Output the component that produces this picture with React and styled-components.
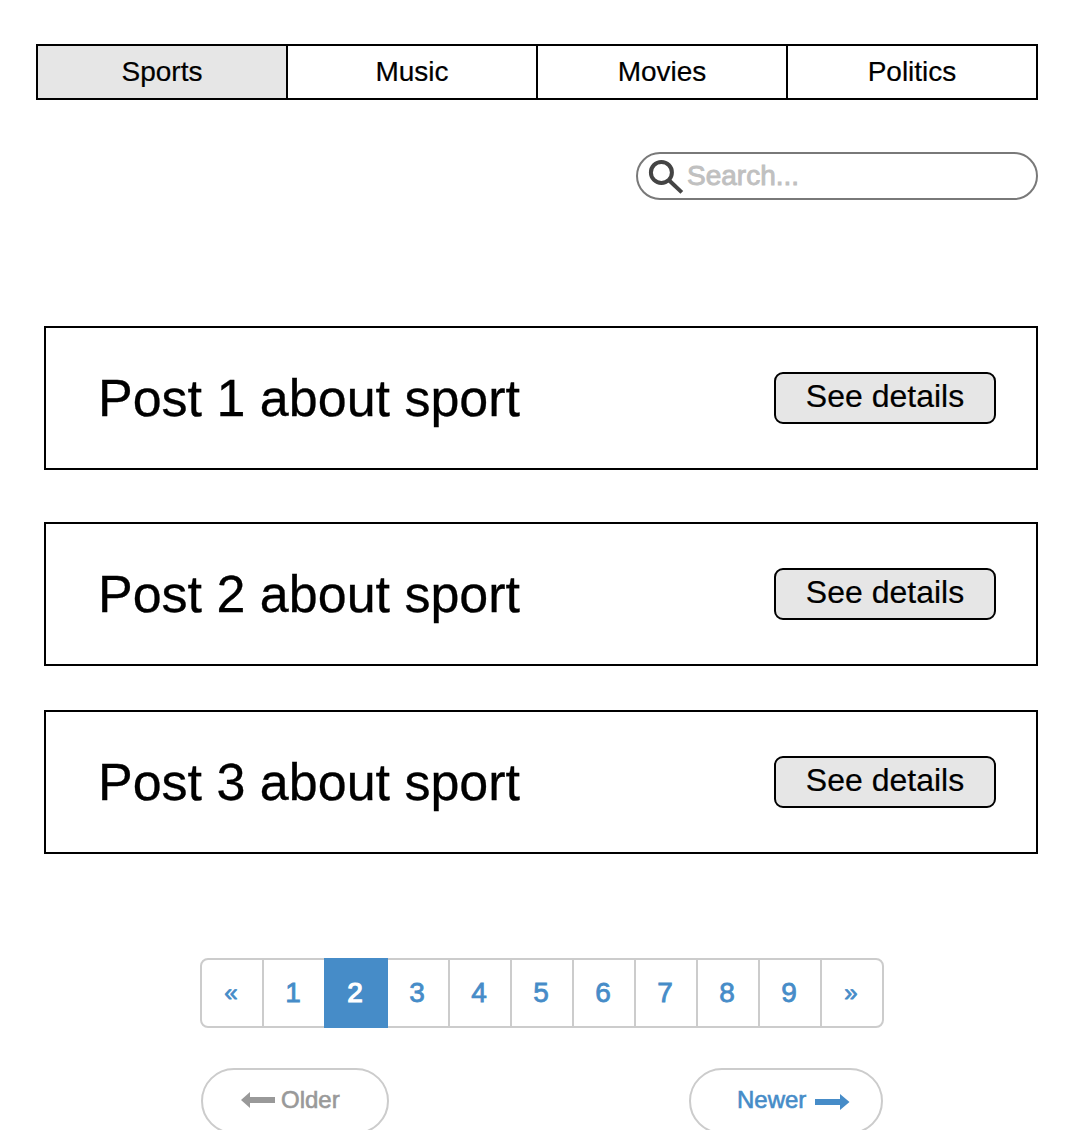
import React from "react";
import styled, { createGlobalStyle } from "styled-components";

const GlobalStyle = createGlobalStyle`
  *, *::before, *::after { box-sizing: border-box; }
  body {
    margin: 0;
    background: #fff;
    color: #000;
    font-family: "Liberation Sans", Arial, Helvetica, sans-serif;
  }
  button, input { font-family: inherit; color: inherit; margin: 0; }
`;

const Page = styled.div`
  display: flex;
  flex-direction: column;
  width: 1080px;
  height: 1130px;
  padding: 44px 42px 0 36px;
  overflow: hidden;
`;

const Tabs = styled.nav`
  display: grid;
  grid-template-columns: repeat(3, 250px) 1fr;
  flex: none;
  height: 56px;
  border: 2px solid #000;
`;

const Tab = styled.button`
  display: flex;
  align-items: center;
  justify-content: center;
  padding: 0;
  border: 0;
  border-right: ${(p) => (p.$last ? "0" : "2px solid #000")};
  background: ${(p) => (p.$active ? "#e6e6e6" : "#fff")};
  font-size: 28px;
  line-height: 32px;
  -webkit-text-stroke: 0.2px currentColor;
`;

const SearchBox = styled.label`
  display: flex;
  flex: none;
  align-items: center;
  align-self: flex-end;
  gap: 3px;
  width: 402px;
  height: 48px;
  margin-top: 52px;
  padding: 0 24px 0 10px;
  border: 2px solid #797979;
  border-radius: 24px;
`;

const SearchInput = styled.input`
  flex: 1;
  min-width: 0;
  height: 32px;
  padding: 0;
  border: 0;
  outline: 0;
  background: transparent;
  font-size: 28px;
  line-height: 32px;
  &::placeholder {
    color: #c0c0c0;
    opacity: 1;
    -webkit-text-stroke: 0.9px #c0c0c0;
  }
`;

const PostList = styled.main`
  display: flex;
  flex: none;
  flex-direction: column;
  margin: 126px 0 0 8px;
`;

const Post = styled.article`
  display: flex;
  align-items: center;
  justify-content: space-between;
  height: 144px;
  margin-top: ${(p) => p.$gap}px;
  padding: 0 40px 0 52px;
  border: 2px solid #000;
`;

const PostTitle = styled.h2`
  margin: 0;
  font-size: 52px;
  font-weight: 400;
  line-height: 60px;
  -webkit-text-stroke: 0.3px currentColor;
`;

const DetailsButton = styled.button`
  display: flex;
  align-items: center;
  justify-content: center;
  width: 222px;
  height: 52px;
  padding: 0 0 4px;
  border: 2px solid #000;
  border-radius: 9px;
  background: #e6e6e6;
  font-size: 32px;
  line-height: 36px;
  -webkit-text-stroke: 0.2px currentColor;
`;

const Pagination = styled.nav`
  display: flex;
  flex: none;
  height: 70px;
  margin: 104px 0 0 164px;
`;

const PageCell = styled.button`
  display: flex;
  flex: none;
  align-items: center;
  justify-content: center;
  width: 64px;
  margin-right: -2px;
  padding: 0 2px 0 0;
  border: 2px solid ${(p) => (p.$active ? "#468cc8" : "#ccc")};
  background: ${(p) => (p.$active ? "#468cc8" : "#fff")};
  color: ${(p) => (p.$active ? "#fff" : "#468cc8")};
  position: relative;
  z-index: ${(p) => (p.$active ? 1 : 0)};
  font-size: ${(p) => (p.$arrow ? 24 : 28)}px;
  line-height: 32px;
  -webkit-text-stroke: ${(p) => (p.$active ? "1.2px" : "0.8px")} currentColor;
  &:first-child { border-radius: 8px 0 0 8px; }
  &:last-child { border-radius: 0 8px 8px 0; }
`;

const Pager = styled.div`
  display: flex;
  flex: none;
  justify-content: space-between;
  margin: 40px 155px 0 165px;
`;

const PagerButton = styled.button`
  display: flex;
  align-items: center;
  gap: ${(p) => (p.$older ? 6 : 9)}px;
  width: ${(p) => (p.$older ? 188 : 194)}px;
  height: 66px;
  padding: 0 0 2px ${(p) => (p.$older ? 38 : 46)}px;
  border: 2px solid #ccc;
  border-radius: 33px;
  background: #fff;
  color: ${(p) => (p.$older ? "#999" : "#468cc8")};
  font-size: 24px;
  line-height: 28px;
  -webkit-text-stroke: 0.6px currentColor;
`;

const ArrowSvg = styled.svg`
  display: block;
  flex: none;
  margin-top: ${(p) => p.$drop}px;
`;

const SearchIcon = () => (
  <svg width="36" height="36" viewBox="0 0 36 36" fill="none" stroke="#444" strokeWidth="4">
    <circle cx="13.4" cy="14.4" r="10.5" />
    <path d="M21 22.2 33.8 34.4" />
  </svg>
);

const LeftArrow = () => (
  <ArrowSvg width="34" height="16" viewBox="0 0 34 16" fill="currentColor" stroke="none" $drop={0}>
    <path d="M0 8 9 0V5H34V11H9V16Z" />
  </ArrowSvg>
);

const RightArrow = () => (
  <ArrowSvg width="35" height="16" viewBox="0 0 35 16" fill="currentColor" stroke="none" $drop={4}>
    <path d="M0 5H25V0L34.5 8 25 16V11H0Z" />
  </ArrowSvg>
);

const tabs = ["Sports", "Music", "Movies", "Politics"];
const posts = [
  { title: "Post 1 about sport", gap: 0 },
  { title: "Post 2 about sport", gap: 52 },
  { title: "Post 3 about sport", gap: 44 },
];
const pages = ["«", "1", "2", "3", "4", "5", "6", "7", "8", "9", "»"];

export default function App() {
  return (
    <>
      <GlobalStyle />
      <Page>
        <Tabs>
          {tabs.map((name, i) => (
            <Tab key={name} $active={i === 0} $last={i === tabs.length - 1}>
              {name}
            </Tab>
          ))}
        </Tabs>
        <SearchBox>
          <SearchIcon />
          <SearchInput placeholder="Search..." />
        </SearchBox>
        <PostList>
          {posts.map(({ title, gap }) => (
            <Post key={title} $gap={gap}>
              <PostTitle>{title}</PostTitle>
              <DetailsButton>See details</DetailsButton>
            </Post>
          ))}
        </PostList>
        <Pagination>
          {pages.map((label) => (
            <PageCell key={label} $active={label === "2"} $arrow={label === "«" || label === "»"}>
              {label}
            </PageCell>
          ))}
        </Pagination>
        <Pager>
          <PagerButton $older>
            <LeftArrow />
            Older
          </PagerButton>
          <PagerButton>
            Newer
            <RightArrow />
          </PagerButton>
        </Pager>
      </Page>
    </>
  );
}
